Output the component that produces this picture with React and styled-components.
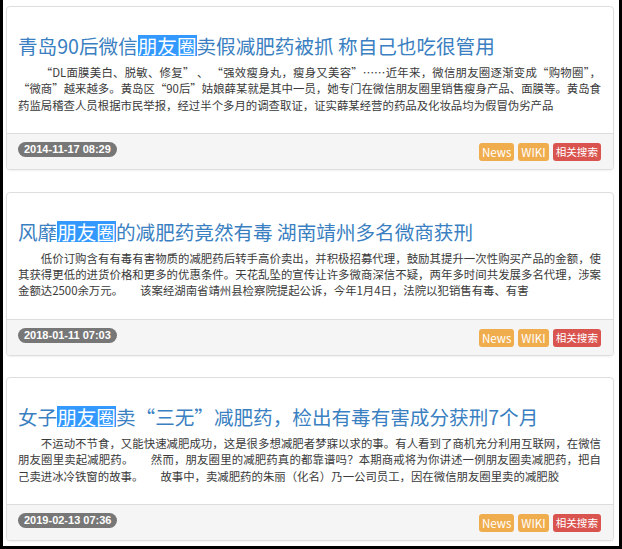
import React from "react";
import styled, { createGlobalStyle } from "styled-components";

const Global = createGlobalStyle`
  html, body { margin: 0; padding: 0; background: #fff; }
  body { font-family: "Noto Sans CJK SC", "Noto Sans", sans-serif; }
  * { box-sizing: border-box; }
`;

const Frame = styled.div`
  width: 622px;
  height: 549px;
  overflow: hidden;
  border-left: 3px solid #000;
  border-right: 3px solid #000;
  border-bottom: 3px solid #000;
  padding: 6px 5px 0 3px;
  display: flex;
  flex-direction: column;
  gap: 21.5px;
  background: #fff;
`;

const Card = styled.div`
  border: 1px solid #dedede;
  border-radius: 4px;
  background: #fff;
  box-shadow: 0 1px 2px rgba(0, 0, 0, 0.06);
  overflow: hidden;
  flex: none;
`;

const Body = styled.div`
  padding: 28px 12px 20px 11px;
`;

const Title = styled.h3`
  margin: 0 0 8px;
  font-size: 19.6px;
  line-height: 21px;
  font-weight: 400;
  color: #3a7fc1;
  white-space: nowrap;
`;

const Mark = styled.span`
  display: inline-block;
  background: #3399ff;
  color: #fff;
  line-height: 21px;
  height: 21px;
  vertical-align: top;
`;

const Text = styled.div`
  margin: 0;
  font-size: 11.4px;
  line-height: 16.3px;
  height: 49px;
  overflow: hidden;
  color: #3a3a3a;
`;

const Line = styled.div`
  white-space: nowrap;
  text-align: justify;
  text-align-last: ${(p) => (p.$last ? "left" : "justify")};
  text-indent: ${(p) => (p.$first ? "2em" : "0")};
`;

const Footer = styled.div`
  background: #f5f5f5;
  border-top: 1px solid #dddddd;
  height: 36px;
  padding: 8px 12px 0 11px;
  display: flex;
  justify-content: space-between;
  align-items: flex-start;
`;

const DateBadge = styled.span`
  display: inline-block;
  background: #777;
  color: #fff;
  font-family: "Liberation Sans", Arial, sans-serif;
  font-weight: 700;
  font-size: 11px;
  line-height: 15px;
  height: 15px;
  padding: 0 6px;
  border-radius: 8px;
  white-space: nowrap;
`;

const Actions = styled.div`
  display: flex;
  gap: 4px;
  margin-top: 1px;
`;

const Tag = styled.span`
  display: inline-block;
  background: ${(p) => (p.$red ? "#d9534f" : "#f0ad4e")};
  color: #fff;
  font-size: ${(p) => (p.$red ? "10.6px" : "11.5px")};
  line-height: 18px;
  height: 18px;
  padding: 0 3px;
  border-radius: 3px;
  white-space: nowrap;
`;

const items = [
  {
    pre: "青岛90后微信",
    post: "卖假减肥药被抓 称自己也吃很管用",
    lines: [
      "“DL面膜美白、脱敏、修复” 、 “强效瘦身丸，瘦身又美容”……近年来，微信朋友圈逐渐变成“购物圈”，",
      "“微商”越来越多。黄岛区“90后”姑娘薛某就是其中一员，她专门在微信朋友圈里销售瘦身产品、面膜等。黄岛食",
      "药监局稽查人员根据市民举报，经过半个多月的调查取证，证实薛某经营的药品及化妆品均为假冒伪劣产品",
    ],
    date: "2014-11-17 08:29",
  },
  {
    pre: "风靡",
    post: "的减肥药竟然有毒 湖南靖州多名微商获刑",
    lines: [
      "低价订购含有有毒有害物质的减肥药后转手高价卖出，并积极招募代理，鼓励其提升一次性购买产品的金额，使",
      "其获得更低的进货价格和更多的优惠条件。天花乱坠的宣传让许多微商深信不疑，两年多时间共发展多名代理，涉案",
      "金额达2500余万元。　　该案经湖南省靖州县检察院提起公诉，今年1月4日，法院以犯销售有毒、有害",
    ],
    date: "2018-01-11 07:03",
  },
  {
    pre: "女子",
    post: "卖“三无”减肥药，检出有毒有害成分获刑7个月",
    lines: [
      "不运动不节食，又能快速减肥成功，这是很多想减肥者梦寐以求的事。有人看到了商机充分利用互联网，在微信",
      "朋友圈里卖起减肥药。　　然而，朋友圈里的减肥药真的都靠谱吗？本期商戒将为你讲述一例朋友圈卖减肥药，把自",
      "己卖进冰冷铁窗的故事。　　故事中，卖减肥药的朱丽（化名）乃一公司员工，因在微信朋友圈里卖的减肥胶",
    ],
    date: "2019-02-13 07:36",
  },
];

export default function App() {
  return (
    <>
      <Global />
      <Frame>
        {items.map((it) => (
          <Card key={it.date}>
            <Body>
              <Title>
                {it.pre}
                <Mark>朋友圈</Mark>
                {it.post}
              </Title>
              <Text>
                {it.lines.map((l, i) => (
                  <Line key={i} $first={i === 0} $last={i === it.lines.length - 1}>
                    {l}
                  </Line>
                ))}
              </Text>
            </Body>
            <Footer>
              <DateBadge>{it.date}</DateBadge>
              <Actions>
                <Tag>News</Tag>
                <Tag>WIKI</Tag>
                <Tag $red>相关搜索</Tag>
              </Actions>
            </Footer>
          </Card>
        ))}
      </Frame>
    </>
  );
}
